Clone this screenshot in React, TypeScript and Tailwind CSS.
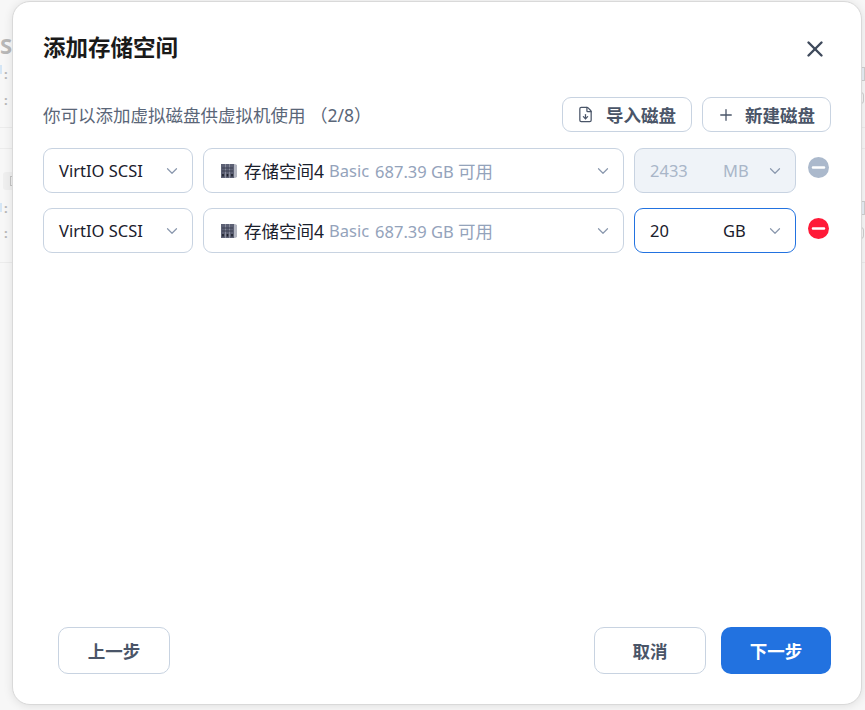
import React from 'react';
import { ChevronDown, FileDown, Minus, Plus, X } from 'lucide-react';

const font = 'font-["Noto_Sans","Noto_Sans_CJK_SC",sans-serif]';

const Caret = () => <ChevronDown className="w-[18px] h-[18px] shrink-0 -mt-[2px] text-[#8a98ae]" strokeWidth={1.6} />;

const DiskIcon = () => (
  <svg width="18" height="16" viewBox="0 0 18 16" className="shrink-0 -mt-[2px]">
    <path d="M1 1h14l2 1v12l-2 1H1z" fill="#b4b7c2" />
    <rect x="1" y="1" width="4" height="14" fill="#5d6175" />
    <rect x="5.500" y="1" width="4" height="14" fill="#5d6175" />
    <rect x="10" y="1" width="4" height="14" fill="#5d6175" />
    <path d="M2 5h11M2 8h11" stroke="#3a3e50" strokeWidth="1" />
    <path d="M3 11v2.500M7.500 11v2.500M12 11v2.500" stroke="#1f222c" strokeWidth="1.600" />
  </svg>
);

const OutlineButton = ({ icon, label, width }: { icon: React.ReactNode; label: string; width: string }) => (
  <button className={`${width} h-[35px] pl-[14px] flex items-center border border-[#c8d3e1] rounded-[9px] bg-white text-[#4a5568] text-[17.5px] font-bold`}>
    {icon}
    <span className="pt-[2px]">{label}</span>
  </button>
);

const DiskRow = ({ size, unit, active }: { size: string; unit: string; active?: boolean }) => (
  <div className="flex items-center gap-[10px]">
    <div className="w-[150px] h-[45px] pl-[15px] pr-[11px] pt-[2px] flex items-center justify-between border border-[#c8d3e1] rounded-[9px] text-[16.5px] text-[#1a202c]">
      <span>VirtIO SCSI</span>
      <Caret />
    </div>
    <div className="w-[421px] h-[45px] pl-[16px] pr-[11px] pt-[2px] flex items-center justify-between border border-[#c8d3e1] rounded-[9px] text-[16.5px]">
      <div className="flex items-center">
        <DiskIcon />
        <span className="ml-[6px] text-[17.5px] text-[#1a202c]">存储空间4</span>
        <span className="ml-[5px] text-[#94a3bb]">Basic</span>
        <span className="ml-[6px] text-[#94a3bb]">
          687.39 GB <span className="text-[17.5px]">可用</span>
        </span>
      </div>
      <Caret />
    </div>
    <div
      className={
        active
          ? 'w-[162px] h-[45px] pl-[15px] pr-[11px] pt-[2px] flex items-center border border-[#2272e0] rounded-[9px] text-[16.5px] text-[#1a202c]'
          : 'w-[162px] h-[45px] pl-[15px] pr-[11px] pt-[2px] flex items-center border border-[#c8d3e1] rounded-[9px] bg-[#eff3f8] text-[16.5px] text-[#a9b6c8]'
      }
    >
      <span className="w-[73px]">{size}</span>
      <span className="flex-1">{unit}</span>
      <Caret />
    </div>
    <div
      className={
        active
          ? 'w-[21px] h-[21px] ml-[2px] -mt-[4px] rounded-full bg-[#ff1a38] flex items-center justify-center'
          : 'w-[21px] h-[21px] ml-[2px] -mt-[6px] rounded-full bg-[#abb9cc] flex items-center justify-center'
      }
    >
      <Minus className="w-[19px] h-[19px] text-white" strokeWidth={3} />
    </div>
  </div>
);

// page behind the dialog, only its edges show
const Backdrop = () => (
  <div className="absolute inset-0 bg-[#f7f7f7] overflow-hidden">
    <div className="absolute left-0 top-[29px] text-[22px] font-bold text-[#b8b8b8]">S</div>
    {[66, 92, 200, 225].map((top) => (
      <div key={top} className="absolute left-[4px] text-[13px] leading-[16px] font-bold text-[#b8b8b8]" style={{ top }}>
        :
      </div>
    ))}
    <div className="absolute left-0 top-[65px] w-[2px] h-[9px] bg-[#d5e6f5]" />
    <div className="absolute left-0 top-[203px] w-[2px] h-[9px] bg-[#d5e6f5]" />
    <div className="absolute left-[3px] top-[172px] w-[12px] h-[18px] bg-[#efefef] rounded-[3px]" />
    <div className="absolute left-[10px] top-[176px] w-[5px] h-[10px] border border-[#c4c4c4]" />
    {[127, 148, 262].map((top) => (
      <div key={top} className="absolute left-0 right-0 h-px bg-[#ececec]" style={{ top }} />
    ))}
    {[67, 201].map((top) => (
      <div key={top} className="absolute left-[860px] w-[5px] h-[14px] border border-[#cfcfcf] bg-[#e9eff6]" style={{ top }} />
    ))}
    {[92, 227].map((top) => (
      <div key={top} className="absolute left-[858px] w-[6px] h-[12px] rounded-full border border-[#cfcfcf]" style={{ top }} />
    ))}
  </div>
);

export default function App() {
  return (
    <div className={`relative w-[865px] h-[710px] overflow-hidden pl-[12px] pt-[1px] ${font}`}>
      <Backdrop />
      <div className="relative w-[850px] h-[704px] bg-white rounded-[18px] border border-[#d9d9d9] flex flex-col pl-[30px] pr-[30px] shadow-[0_1px_10px_rgba(0,0,0,0.10)]">
        <header className="flex items-center justify-between h-[28px] mt-[32px]">
          <h2 className="text-[22.500px] font-bold text-[#1a1a1a]">添加存储空间</h2>
          <X className="w-[26px] h-[26px] text-[#3f4a5c] mr-[3px] mt-[2px]" strokeWidth={2.25} />
        </header>
        <div className="flex items-center justify-between mt-[35px] h-[35px]">
          <p className="pt-[2px] text-[17.5px] text-[#5a6678]">你可以添加虚拟磁盘供虚拟机使用 （2/8）</p>
          <div className="flex gap-[10px]">
            <OutlineButton width="w-[130px]" icon={<FileDown className="w-[17px] h-[17px] mr-[12px]" strokeWidth={1.75} />} label="导入磁盘" />
            <OutlineButton width="w-[129px]" icon={<Plus className="w-[18px] h-[18px] mr-[10px]" strokeWidth={1.75} />} label="新建磁盘" />
          </div>
        </div>
        <div className="flex flex-col gap-[15px] mt-[16px]">
          <DiskRow size="2433" unit="MB" />
          <DiskRow size="20" unit="GB" active />
        </div>
        <footer className="mt-auto mb-[30px] flex items-center justify-between pl-[15px]">
          <button className="w-[112px] h-[47px] pt-[2px] border border-[#c8d3e1] rounded-[10px] text-[#4a5568] text-[17.5px] font-bold">上一步</button>
          <div className="flex gap-[15px]">
            <button className="w-[112px] h-[47px] pt-[2px] border border-[#c8d3e1] rounded-[10px] text-[#4a5568] text-[17.5px] font-bold">取消</button>
            <button className="w-[110px] h-[47px] pt-[2px] rounded-[10px] bg-[#2272e0] text-white text-[17.5px] font-bold">下一步</button>
          </div>
        </footer>
      </div>
    </div>
  );
}
